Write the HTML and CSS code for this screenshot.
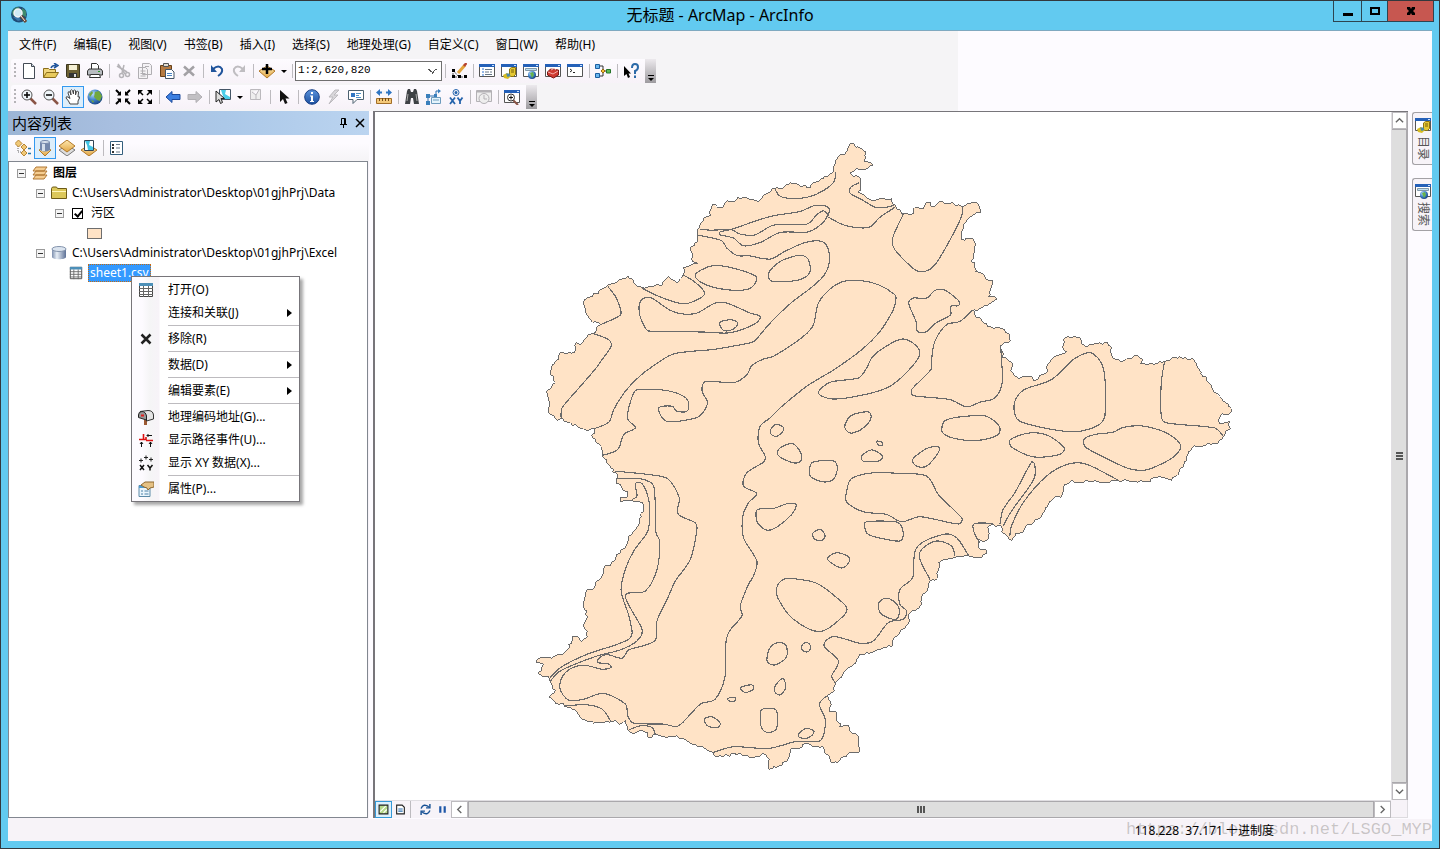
FILE: index.html
```html
<!DOCTYPE html>
<html lang="zh-CN">
<head>
<meta charset="utf-8">
<title>无标题 - ArcMap - ArcInfo</title>
<link rel="stylesheet" href="styles.css">
</head>
<body>
<svg class="defs" aria-hidden="true">
  <defs>
    <linearGradient id="blueBall" x1="0" y1="0" x2="0" y2="1"><stop offset="0" stop-color="#5b93dc"/><stop offset="1" stop-color="#1c4f9f"/></linearGradient>
    <linearGradient id="gold" x1="0" y1="0" x2="0" y2="1"><stop offset="0" stop-color="#ffe9b0"/><stop offset="1" stop-color="#e0a544"/></linearGradient>
    <linearGradient id="steel" x1="0" y1="0" x2="1" y2="0"><stop offset="0" stop-color="#7d8fae"/><stop offset=".35" stop-color="#e8eff7"/><stop offset="1" stop-color="#5d7196"/></linearGradient>
    <radialGradient id="earth" cx=".35" cy=".3" r=".8"><stop offset="0" stop-color="#b8dcfa"/><stop offset=".5" stop-color="#3f80c8"/><stop offset="1" stop-color="#123a78"/></radialGradient>
    <symbol id="win" viewBox="0 0 16 16"><path d="M.5 1.500h15v12H.5z" fill="#fff" stroke="#555"/><path d="M0 1h16v3H0z" fill="#2460b8"/><path d="M13 2h2v1h-2z" fill="#cfe2ff"/></symbol>
    <symbol id="catalog" viewBox="0 0 16 16"><use href="#win"/><path d="M8.500 6l2-1.500h4v7l-2 2h-4z" fill="#e6c832" stroke="#8d7410"/><path d="M2 12l4-2 4 3-3 3-4-1z" fill="#d8bd21"/><path d="M5 10.500h3.500l1 2.500-3 1z" fill="#4b8aa8"/><path d="M10 7h3M10 9h3" stroke="#775f08"/></symbol>
    <symbol id="search" viewBox="0 0 16 16"><use href="#win"/><path d="M2.500 5.500h11v2h-11z" fill="#bfe0f3" stroke="#8197a8"/><circle cx="9" cy="12" r="4" fill="url(#earth)"/><path d="M7 10l3-1 1 3-2 3z" fill="#68b34b"/></symbol>
    <symbol id="grid" viewBox="0 0 16 16"><path d="M1.500 1.500h13v13h-13z" fill="#fff" stroke="#444"/><path d="M1 1h14v3H1z" fill="#4c8fb8"/><path d="M1 6.500h14M1 9.500h14M1 12.500h14M5.500 4v11M10.500 4v11" stroke="#666"/></symbol>
    <symbol id="cyl" viewBox="0 0 16 16"><path d="M1 4v8c0 3 14 3 14 0V4z" fill="url(#steel)"/><ellipse cx="8" cy="4" rx="7" ry="2.500" fill="#dbe4ef" stroke="#8494ad"/></symbol>
  </defs>
</svg>

<div class="window">
  <header class="titlebar">
    <svg class="app-icon" viewBox="0 0 18 18"><circle cx="9" cy="8.500" r="8" fill="#1f4d78"/><path d="M2 6q2-5 7-5l-1 4-5 5zM12 2l4 3v6l-4-2z" fill="#3f8a6c"/><path d="M3 11l5 4 3-1-3-4z" fill="#3a78ac"/><circle cx="8" cy="7" r="4" fill="#cfeaf5" stroke="#f4f4f4" stroke-width="1.500"/><path d="M11 10l5 6" stroke="#6a4632" stroke-width="3"/><path d="M11 10l4 5" stroke="#eee"/></svg>
    <h1>无标题 - ArcMap - ArcInfo</h1>
    <div class="caption-buttons">
      <button class="min" aria-label="最小化"><svg viewBox="0 0 12 12"><path d="M1 8h10v3H1z"/></svg></button>
      <button class="max" aria-label="最大化"><svg viewBox="0 0 12 12"><path d="M1 2h10v8H1zM3 4v4h6V4z" fill-rule="evenodd"/></svg></button>
      <button class="close" aria-label="关闭"><svg viewBox="0 0 12 12"><path d="M2 2h3l1 2 1-2h3v2L8 6l2 2v2H7L6 8l-1 2H2V8l2-2-2-2z"/></svg></button>
    </div>
  </header>

  <div class="client">
    <div class="commands">
      <nav class="menubar">
        <button>文件(F)</button><button>编辑(E)</button><button>视图(V)</button><button>书签(B)</button><button>插入(I)</button><button>选择(S)</button><button>地理处理(G)</button><button>自定义(C)</button><button>窗口(W)</button><button>帮助(H)</button>
      </nav>

      <div class="toolbar">
        <i class="grip"></i>
        <button aria-label="新建"><svg viewBox="0 0 16 16"><path d="M2.500.500h8l3 3v12h-11z" fill="#fff" stroke="#444b55"/><path d="M10.500.500v3h3" fill="#cdd9e4" stroke="#444b55"/></svg></button>
        <button aria-label="打开"><svg viewBox="0 0 16 16"><path d="M.5 14.500v-9h5l1 1h6v3" fill="#f0d57b" stroke="#8a6d1b"/><path d="M.5 14.500l3-5h12l-3 5z" fill="#e8c95c" stroke="#8a6d1b"/><path d="M8 5q1-3 5-2.500M11 0l4 2.500L11 5" fill="none" stroke="#20549c" stroke-width="1.500"/></svg></button>
        <button aria-label="保存"><svg viewBox="0 0 16 16"><path d="M1.500 1.500h13v13h-12l-1-1z" fill="#6c6033" stroke="#3b351e"/><path d="M4 2h8v5H4z" fill="#f5f0d5"/><path d="M4 10h8v4H4z" fill="#333"/><path d="M9 11h2v3H9z" fill="#ddd"/></svg></button>
        <button aria-label="打印"><svg viewBox="0 0 16 16"><path d="M4.500 6V.500h5l2 2V6" fill="#fff" stroke="#333"/><path d="M2 6h12l1.500 2v4H.5V8z" fill="#b8bcc0" stroke="#333"/><path d="M3.500 11.500h9l1 3h-11z" fill="#fff" stroke="#333"/><path d="M11 8.500h2" stroke="#2c9c2c"/></svg></button>
        <i class="sep"></i>
        <button aria-label="剪切" disabled><svg viewBox="0 0 16 16" fill="none" stroke="#b5b3b7" stroke-width="1.500"><path d="M3 1l7 10M9 2L7 10M2 3l10 6"/><circle cx="6.500" cy="12.500" r="2"/><circle cx="12.500" cy="11.500" r="2"/></svg></button>
        <button aria-label="复制" disabled><svg viewBox="0 0 16 16" fill="#f4f2f5" stroke="#b0aeb2"><path d="M5.500.500h7l2 2v9h-9zM1.500 4.500h7l2 2v9h-9z"/><path d="M3.500 8h5M3.500 10.500h5M3.500 13h5M8 3.500h4" /></svg></button>
        <button aria-label="粘贴"><svg viewBox="0 0 16 16"><path d="M1.500 2.500h11v11h-11z" fill="#b57a42" stroke="#674018"/><path d="M4.500.500h5v3h-5z" fill="#e2dcd2" stroke="#555"/><path d="M6.500 6.500h6l2.500 2.500v6.500H6.500z" fill="#fff" stroke="#456"/><path d="M8 10.500h5M8 12.500h5" stroke="#4b83c3"/></svg></button>
        <button aria-label="删除" disabled><svg viewBox="0 0 16 16"><path d="M3 3.500l10 9M13 3.500l-10 9" stroke="#a3a1a5" stroke-width="2.500"/></svg></button>
        <i class="sep"></i>
        <button aria-label="撤消"><svg viewBox="0 0 16 16"><path d="M4 6q6-5 9 0 1 4-4 7" fill="none" stroke="#20549c" stroke-width="2"/><path d="M2 2l0 7h6z" fill="#20549c"/></svg></button>
        <button aria-label="恢复" disabled><svg viewBox="0 0 16 16"><path d="M12 6q-6-5-9 0-1 4 4 7" fill="none" stroke="#bfbdc1" stroke-width="2"/><path d="M14 2v7H8z" fill="#bfbdc1"/></svg></button>
        <i class="sep"></i>
        <button aria-label="添加数据"><svg viewBox="0 0 16 16"><path d="M0 8l8-5 8 5-8 7z" fill="url(#gold)" stroke="#b17828"/><path d="M8 1v10M3 6h10" stroke="#000" stroke-width="2.500"/></svg></button>
        <button class="drop" aria-label="添加数据选项"></button>
        <i class="sep"></i>
        <select class="scale" aria-label="比例尺"><option>1:2,620,820</option></select>
        <i class="sep"></i>
        <button aria-label="编辑器"><svg viewBox="0 0 16 16"><path d="M2 7v7h12M2 7l5 6" stroke="#555" stroke-dasharray="2 1" fill="none"/><path d="M1 6h3v3H1zM1 12h3v3H1zM7 12h3v3H7zM13 12h3v3h-3z"/><path d="M7 10l7-8" stroke="#e2a33b" stroke-width="3"/><path d="M13 3l2.500-3" stroke="#b54030" stroke-width="2.500"/></svg></button>
        <i class="sep"></i>
        <button aria-label="内容列表"><svg viewBox="0 0 16 16"><use href="#win"/><path d="M3 6h2M3 9h2M3 12h2" stroke="#2a6fd0"/><path d="M6 6.500h7M6 9h4M11 9h2M6 11.500h7" stroke="#678"/></svg></button>
        <button aria-label="目录"><svg viewBox="0 0 16 16"><use href="#catalog"/></svg></button>
        <button aria-label="搜索"><svg viewBox="0 0 16 16"><use href="#search"/></svg></button>
        <button aria-label="工具箱"><svg viewBox="0 0 16 16"><use href="#win"/><path d="M2.500 9l3-3 8 1v5l-5 3-6-3z" fill="#cf3a31" stroke="#7c1815"/><path d="M3 9l5 2 5-3M6 7l3-1.500 2 1.500" stroke="#f6aea8" fill="none"/></svg></button>
        <button aria-label="Python"><svg viewBox="0 0 16 16"><use href="#win"/><path d="M3 6l2 1.500L3 9M6 9.500h2" fill="none" stroke="#222"/></svg></button>
        <i class="sep"></i>
        <button aria-label="模型构建器"><svg viewBox="0 0 16 16"><path d="M5 3h3v10H5M8 8h4" stroke="#333" fill="none"/><path d="M.5 1.500h4v4h-4zM.5 10.500h4v4h-4z" fill="#6ab7ef" stroke="#1c5fa0"/><path d="M8 6l2 2-2 2-2-2z" fill="#f6c03a" stroke="#9b6a0a"/><path d="M11.500 6.500h4v3.500h-4z" fill="#5fbd56" stroke="#26752a"/></svg></button>
        <i class="sep"></i>
        <button aria-label="这是什么"><svg viewBox="0 0 16 16"><path d="M1 3v10l2.500-2 1.500 4 2-1-1.500-3.500H8z"/><path d="M9 5q0-4 3-4t3 3-3 4v3M12 12.500v2.500" fill="none" stroke="#2c6aa8" stroke-width="2"/></svg></button>
        <button class="overflow" aria-label="更多"></button>
      </div>

      <div class="toolbar">
        <i class="grip"></i>
        <button aria-label="放大"><svg viewBox="0 0 16 16"><path d="M9 9l6 6" stroke="#8a5446" stroke-width="2.500"/><circle cx="6" cy="6" r="5" fill="#f0f6fa" stroke="#555"/><path d="M6 3v6M3 6h6" stroke="#000" stroke-width="1.500"/></svg></button>
        <button aria-label="缩小"><svg viewBox="0 0 16 16"><path d="M9 9l6 6" stroke="#8a5446" stroke-width="2.500"/><circle cx="6" cy="6" r="5" fill="#f0f6fa" stroke="#555"/><path d="M3 6h6" stroke="#000" stroke-width="1.500"/></svg></button>
        <button class="active" aria-label="平移"><svg viewBox="0 0 16 16"><path d="M5 15q-1-3-4-6 0-2 2-1l2 1.500L3 4q0-2 2-1l1 3-.500-4.500q1-1.500 2 0L8.500 5V1.500q1-1 2 0V6l1-3.500q1.500-1 2 .5l-.5 5q2-1 1.500 1L13 12v3z" fill="#fff" stroke="#444"/></svg></button>
        <button aria-label="全图"><svg viewBox="0 0 16 16"><circle cx="8" cy="8" r="7.500" fill="url(#earth)"/><path d="M8 3l4-1 3 5-2 5-3-1-3-3zM2 5l3-3 1 2-3 4zM4 11l3 1-1 2z" fill="#72a83d"/></svg></button>
        <i class="sep"></i>
        <button aria-label="固定比例放大"><svg viewBox="0 0 16 16"><path d="M1 1l4 4M15 1l-4 4M1 15l4-4M15 15l-4-4" stroke="#000" stroke-width="2"/><path d="M6 2v4.500H2zM10 2v4.500h4zM6 14V9.500H2zM10 14V9.500h4z"/></svg></button>
        <button aria-label="固定比例缩小"><svg viewBox="0 0 16 16"><path d="M2 2l4 4M14 2l-4 4M2 14l4-4M14 14l-4-4" stroke="#000" stroke-width="1.500"/><path d="M1 1h5L1 6zM15 1h-5l5 5zM1 15h5l-5-5zM15 15h-5l5-5z"/></svg></button>
        <i class="sep"></i>
        <button aria-label="返回"><svg viewBox="0 0 16 16"><path d="M1 8l6-5.500v3h8v5H7v3z" fill="#3c7fe0" stroke="#1d4a9b"/></svg></button>
        <button aria-label="前进" disabled><svg viewBox="0 0 16 16"><path d="M15 8L9 2.500v3H1v5h8v3z" fill="#c2c0c4" stroke="#b1afb3"/></svg></button>
        <i class="sep"></i>
        <button aria-label="选择要素"><svg viewBox="0 0 16 16"><path d="M4.500.500h11v10h-11z" fill="#fff" stroke="#456"/><path d="M6 1h5l-1 4 5 3v2H9z" fill="#4ccde8"/><path d="M1 2v11l3-2.500 1.500 4 2-1L6 9.500h3.500z" fill="#ddd" stroke="#222"/></svg></button>
        <button class="drop" aria-label="选择选项"></button>
        <button aria-label="清除所选" disabled><svg viewBox="0 0 16 16"><path d="M2.500.500h10v10h-10zM4 3l4 3 3-5M8 6v4" fill="#eee" stroke="#bbb9bd"/></svg></button>
        <i class="sep"></i>
        <button aria-label="选择元素"><svg viewBox="0 0 16 16"><path d="M4 1v12l3-3 2 5 2.500-1L9.500 9.500h4z" fill="#111"/></svg></button>
        <i class="sep"></i>
        <button aria-label="识别"><svg viewBox="0 0 16 16"><circle cx="8" cy="8" r="7.300" fill="url(#blueBall)" stroke="#173f86"/><path d="M7 3h2v2H7zM6 6.500h3V12h1v1H6v-1h1V7.500H6z" fill="#fff"/></svg></button>
        <button aria-label="超链接" disabled><svg viewBox="0 0 16 16"><path d="M9 1L3 8h4l-4 7 9-9H8l5-5z" fill="#d9d7db" stroke="#bcbabe"/></svg></button>
        <button aria-label="HTML 弹出窗口"><svg viewBox="0 0 16 16"><path d="M.5 1.500h15v9H9l-4 4v-4H.5z" fill="#fff" stroke="#4c6170"/><path d="M3 4h4v4H3z" fill="#3177c4"/><path d="M8 4.500h5M8 6.500h3M8 8.500h5" stroke="#4c90c8"/></svg></button>
        <i class="sep"></i>
        <button aria-label="测量"><svg viewBox="0 0 16 16"><path d="M0 3.500L4 0v2.500h8V0l4 3.500L12 7V4.500H4V7z" fill="#2f75c2"/><path d="M6 2h4v3H6z" fill="#f5f3f6"/><path d="M.5 9.500h15v5H.5z" fill="#f4c878" stroke="#a36e28"/><path d="M3.500 9v3M6.500 9v3M9.500 9v3M12.500 9v3" stroke="#744a16"/></svg></button>
        <i class="sep"></i>
        <button aria-label="查找"><svg viewBox="0 0 16 16"><path d="M3 2l1-2h2l1 3h2l1-3h2l1 2 2 13h-5l-1-6H7l-1 6H1z" fill="#3e4145"/><path d="M4 5l-1 7M12 5l1 7" stroke="#aaa"/></svg></button>
        <button aria-label="查找路径"><svg viewBox="0 0 16 16"><path d="M2 14V7h8V2M10 2h4" fill="none" stroke="#2c6fae"/><path d="M12 0l3 2-3 2.500zM0 5h4v4H0zM0 12h4v4H0zM8 5h3v3H8z" fill="#3a7fbc"/><path d="M5.500 8.500h9v6h-9z" fill="#e5f4fc" stroke="#6d9bbd"/><path d="M7 11h6" stroke="#6d9bbd"/></svg></button>
        <button aria-label="转到 XY"><svg viewBox="0 0 16 16" fill="none" stroke="#2564ac"><circle cx="8" cy="3.500" r="3"/><circle cx="8" cy="3.500" r=".8" stroke-width="1.500"/><path d="M2 8.500l5 6.500M7 8.500L2 15M9.500 8.500l2.500 3.500 2.500-3.500M12 12v3" stroke-width="1.800"/></svg></button>
        <i class="sep"></i>
        <button aria-label="时间滑块" disabled><svg viewBox="0 0 16 16" fill="#eee" stroke="#b3b1b5"><path d="M.5 1.500h15v11H.5z"/><path d="M1 2.500h14" stroke-width="2"/><circle cx="8" cy="9.500" r="5"/><path d="M8 6v4h3"/></svg></button>
        <i class="sep"></i>
        <button aria-label="查看器"><svg viewBox="0 0 16 16"><use href="#win"/><path d="M9 11l5 5" stroke="#8a5446" stroke-width="2"/><circle cx="7" cy="8.500" r="3.500" fill="#fff" stroke="#333"/><path d="M7 6.500v4M5 8.500h4" stroke="#111"/></svg></button>
        <button class="overflow" aria-label="更多"></button>
      </div>
    </div>

    <main class="workspace">
      <aside class="toc">
        <div class="toc-head">
          <h2>内容列表</h2>
          <button aria-label="自动隐藏"><svg viewBox="0 0 10 10"><path d="M2.500 6V.5h4V6M1 6.500h7M4.500 6.500V10M5.500 1v5" fill="none" stroke="#000"/></svg></button>
          <button aria-label="关闭面板"><svg viewBox="0 0 10 10"><path d="M1 1l8 8M9 1L1 9" stroke="#000" stroke-width="1.500"/></svg></button>
        </div>
        <div class="toc-tools">
          <button aria-label="按绘制顺序列出"><svg viewBox="0 0 16 16"><path d="M3 4v8h5M8 7h3" stroke="#666" stroke-dasharray="1 1" fill="none"/><path d="M3.500 0L7 3.500 3.500 7 0 3.500zM9 4l3 3-3 3-3-3zM9 10l3 3-3 3-3-3z" fill="#f0c878" stroke="#b88736"/><path d="M13 8.500h3M13 13.500h3" stroke="#2a78a8" stroke-width="1.500"/></svg></button>
          <button class="active" aria-label="按源列出"><svg viewBox="0 0 16 16"><path d="M2 10l6-3 6 3-6 6z" fill="url(#gold)" stroke="#b17828"/><path d="M3 2v8q5 3 10 0V2z" fill="#7488ab"/><path d="M5 3h3v8H5z" fill="#d5dfeb"/><ellipse cx="8" cy="2" rx="4.500" ry="1.500" fill="#dde6f0" stroke="#7488ab"/></svg></button>
          <button aria-label="按可见性列出"><svg viewBox="0 0 16 16"><path d="M0 10l8-5 8 5-8 6z" fill="#ddd" stroke="#777"/><path d="M0 6l8-6 8 6-8 6z" fill="url(#gold)" stroke="#b17828"/></svg></button>
          <button aria-label="按选择列出"><svg viewBox="0 0 16 16"><path d="M0 10l8-5 8 5-8 6z" fill="url(#gold)" stroke="#b17828"/><path d="M3.500.500h9v10h-9z" fill="#fff" stroke="#345"/><path d="M4 1h5l-1 4 4 2v3H7L6 5z" fill="#43c3e4"/></svg></button>
          <i class="sep"></i>
          <button aria-label="选项"><svg viewBox="0 0 16 16"><path d="M1.500 1.500h12v13h-12z" fill="#fff" stroke="#345f7d"/><path d="M3 4h2v2H3zM3 7h2v2H3zM3 11h2v2H3z" fill="#333"/><path d="M7 4.500h4M7 8h4M7 12h4" stroke="#6d7c8c"/></svg></button>
        </div>
        <ul class="tree">
          <li class="level-0"><button class="expander" aria-label="折叠"></button><svg viewBox="0 0 16 16"><path d="M1 14l3-4h11l-3 4zM1 10l3-4h11l-3 4zM1 6l3-4h11l-3 4z" fill="#f5cd91" stroke="#b17834"/></svg><strong>图层</strong></li>
          <li class="level-1"><button class="expander" aria-label="折叠"></button><svg viewBox="0 0 16 16"><path d="M.5 13.500v-10l1-1.500h4l1 1.500h9v10z" fill="#dcc85a" stroke="#6d5b16"/><path d="M1 6.500h14" stroke="#fff6bb"/></svg><span>C:\Users\Administrator\Desktop\01gjhPrj\Data</span></li>
          <li class="level-2"><button class="expander" aria-label="折叠"></button><label><input type="checkbox" checked><span>污区</span></label></li>
          <li class="level-3"><i class="swatch"></i></li>
          <li class="level-1"><button class="expander" aria-label="折叠"></button><svg viewBox="0 0 16 16"><use href="#cyl"/></svg><span>C:\Users\Administrator\Desktop\01gjhPrj\Excel</span></li>
          <li class="level-table"><svg class="small" viewBox="0 0 16 16"><use href="#grid"/></svg><span class="selected">sheet1.csv</span></li>
        </ul>
      </aside>

      <section class="view">
        <svg class="map" viewBox="375 112 1016 689" role="img" aria-label="污区地图">
          <path class="coast" d="M851 143 858 147 866 152 866 157 864 161 873 166 867 169 858 169 850 173 860 178 860 184 861 187 858 192 864 195 867 198 875 201 880 199 887 200 892 198 893 204 900 210 902 214 914 214 913 210 918 208 923 209 928 202 934 207 940 201 947 204 959 205 963 207 967 204 977 203 981 213 975 214 967 220 964 227 961 239 973 239 975 247 974 256 971 262 975 263 976 272 983 274 986 279 993 281 989 297 997 299 990 304 980 309 974 310 975 315 982 321 988 327 1005 330 1010 336 1011 341 1000 347 1003 358 1013 364 1011 371 1018 378 1032 377 1034 381 1042 375 1047 373 1048 365 1057 356 1067 352 1063 348 1064 339 1068 337 1080 338 1082 344 1087 347 1108 343 1112 348 1113 358 1121 362 1130 359 1138 356 1143 360 1141 364 1163 363 1172 359 1180 357 1188 360 1193 359 1199 369 1207 381 1217 394 1232 409 1227 415 1222 414 1219 421 1220 424 1226 423 1230 421 1231 429 1226 431 1225 436 1221 440 1218 444 1195 446 1187 458 1183 468 1172 481 1157 478 1147 482 1118 481 1107 483 1093 482 1077 483 1072 481 1064 488 1063 495 1052 501 1045 512 1022 533 1016 534 1012 541 1008 537 1002 533 1002 527 993 525 988 528 988 540 985 542 979 540 979 548 987 552 987 554 982 558 975 558 968 556 955 558 939 563 938 577 935 581 930 582 928 590 923 595 920 607 908 617 909 623 900 633 892 642 892 647 873 653 860 655 853 666 843 675 836 683 834 692 827 696 831 706 829 712 836 713 837 722 841 725 839 728 848 726 850 732 858 737 859 753 853 753 842 758 838 763 831 763 829 757 824 752 822 747 812 747 803 745 797 750 791 750 788 760 782 766 769 770 769 760 765 755 758 758 744 757 740 754 717 758 713 753 687 742 674 737 665 738 655 735 651 739 645 733 630 733 627 728 625 721 619 725 615 721 607 722 597 723 593 724 580 718 575 711 567 708 563 704 555 704 549 698 555 691 550 683 548 677 538 675 543 665 535 663 538 659 548 658 562 655 569 648 572 637 577 637 581 642 587 638 587 632 583 626 587 617 584 610 583 603 585 593 593 590 600 580 604 568 614 562 616 555 626 546 628 537 637 527 641 517 643 508 642 503 632 501 620 502 620 498 627 498 627 492 620 485 616 484 617 477 610 468 602 457 601 447 592 438 594 429 588 431 578 428 570 423 560 419 557 421 548 413 548 400 546 392 555 383 550 373 552 365 558 360 560 353 574 353 576 343 580 345 588 335 595 333 596 328 601 325 590 320 585 313 584 300 592 297 607 286 617 282 628 276 633 282 640 287 648 287 662 285 668 277 677 283 683 275 683 268 698 264 691 259 691 247 697 242 697 233 703 219 708 217 712 205 723 207 727 201 734 202 737 197 752 200 758 202 772 189 783 188 790 183 797 184 810 188 813 183 823 179 834 171 836 160 840 155 845 154Z"/>
          <g class="contours" transform="translate(530 130) scale(.333333)">
            <polyline points="735,178 745,195 760,203 800,206 840,200 880,182 912,155 916,125"/>
            <polyline points="988,158 962,172 960,190 1000,212 1035,232 1070,232 1092,226"/>
            <polyline points="895,262 940,285 990,294 1020,291 1050,262 1080,242 1095,232"/>
            <polyline points="508,298 540,301 605,300 630,313 675,315 730,286 830,283 860,255 880,243 892,258 865,290 830,307 750,308 690,338 640,348 610,325 570,315 570,306 605,298 720,260 810,245 850,228 885,228 898,240 892,262"/>
            <polyline points="500,317 515,318 575,333 590,355 620,377 655,378 720,388 760,367 825,338 875,335 895,360 895,410 875,445 835,480 780,522 720,580 680,627 665,638 605,650 545,660 430,673 360,715 330,738 285,785 250,840 235,878 190,898"/>
            <polygon points="495,435 545,408 600,413 675,438 678,455 655,478 590,480 520,462"/>
            <polygon points="715,430 750,395 810,376 835,390 838,430 800,452 725,454"/>
            <polyline points="458,435 495,458 523,488 510,505 465,522 420,513 370,493 335,475"/>
            <polygon points="330,515 350,503 370,508 420,542 460,553 500,550 555,520 590,520 660,550 690,560 680,578 640,598 590,610 520,607 355,604 340,585 327,550"/>
            <polygon points="568,580 590,571 615,573 622,585 605,600 580,602"/>
            <polyline points="232,470 255,500 272,545 265,560 210,585"/>
            <polyline points="190,612 235,630 242,650 215,690 195,718 150,770 95,835 92,868"/>
            <polyline points="215,978 262,960 280,915 315,895 293,870 295,835 315,783 340,779 410,783 460,800 475,820 470,845 440,845 425,830 385,835 400,870 425,877 475,870 510,858 532,820 517,790 517,765 530,755 615,758 650,735 665,708 700,688 730,680 820,620 850,585 865,520 900,478 940,455 990,452 1045,465 1095,495 1098,508 1090,540 1050,605 995,660 915,718 830,770 750,835 720,865 690,890 685,940 705,980 700,998 650,1030 640,1070 680,1092 655,1120 638,1160 640,1225 680,1295 670,1340 655,1365 630,1430 635,1460 595,1510 585,1560 585,1640 555,1710 510,1725 445,1790 400,1785 310,1782 292,1760 285,1725 220,1693 160,1710 115,1713 88,1675 105,1630 155,1608 215,1620 242,1615 232,1603 202,1600 210,1583 232,1576 275,1587 295,1562 373,1535 380,1475 415,1400 435,1355 480,1290 500,1200 495,1180 443,1153 447,1105 415,1050 370,1037 255,1025"/>
            <polyline points="258,1048 330,1048 370,1070 377,1210 388,1235 380,1320 345,1385 285,1400 335,1500 320,1535 270,1562 195,1582 90,1625 60,1655"/>
            <polyline points="305,1110 320,1100 315,1063 335,1063 355,1110 358,1170 350,1210 310,1265 285,1320 272,1380 280,1415 298,1470 298,1528 170,1575 90,1615 55,1650"/>
            <polyline points="1120,253 1088,325 1095,360 1155,420 1185,425 1215,405 1255,340 1295,260 1298,230"/>
            <polygon points="1136,520 1150,505 1190,505 1215,482 1245,481 1288,515 1285,528 1262,530 1262,555 1215,582 1190,606 1162,605 1158,575"/>
            <polyline points="1330,540 1290,575 1250,585 1215,635 1205,690 1203,720 1145,780 1150,798 1260,810 1310,832 1350,818 1395,805 1417,760 1415,690 1412,645"/>
            <polygon points="865,790 900,758 985,745 1010,715 1025,685 1060,655 1120,628 1168,660 1155,700 1080,770 990,798 905,808"/>
            <polygon points="1670,670 1690,672 1715,700 1725,740 1728,820 1715,880 1630,907 1470,875 1453,825 1480,782 1565,750 1630,690"/>
            <polyline points="1905,695 1895,760 1895,860 1910,880 2055,895 2080,918"/>
            <polygon points="1240,880 1258,868 1320,859 1370,860 1408,890 1405,915 1350,932 1290,930 1240,912"/>
            <polygon points="1442,930 1500,910 1555,918 1603,955 1590,975 1510,982 1445,952"/>
            <polygon points="1662,930 1695,915 1750,908 1780,894 1835,889 1910,910 1952,945 1935,980 1870,1015 1835,1023 1790,1015 1670,955"/>
            <polyline points="1410,1185 1420,1140 1455,1090 1505,998 1515,1005 1512,1050 1445,1145 1420,1190"/>
            <polyline points="1440,1220 1445,1190 1480,1120 1550,1040 1615,1004 1670,1004 1765,1052"/>
            <polyline points="1390,1182 1333,1183 1333,1210 1350,1240"/>
            <polygon points="965,1047 1030,1030 1110,1032 1190,1040 1225,1095 1295,1165 1290,1183 1260,1180 1170,1162 1115,1177 1070,1155 1000,1147 950,1118 950,1085"/>
            <polygon points="1007,1178 1100,1178 1118,1200 1115,1233 1080,1232 1020,1218 1007,1205"/>
            <polyline points="1315,1277 1280,1225 1240,1215 1160,1255 1148,1345 1110,1380 1110,1425 1130,1445 1120,1470 1075,1480 1030,1535 990,1542 910,1522 882,1550 925,1595 905,1640 915,1660"/>
            <polyline points="1275,1280 1265,1250 1220,1235 1175,1260 1170,1290 1200,1350"/>
            <polygon points="720,905 735,885 758,892 760,902 745,918 728,918"/>
            <polygon points="742,965 765,947 790,943 812,970 812,995 790,1000 750,983"/>
            <polygon points="838,1020 848,998 910,994 922,1015 910,1050 878,1057 842,1042"/>
            <polygon points="945,885 965,857 1015,847 1023,865 1000,895 965,911 948,902"/>
            <polygon points="1040,935 1056,938 1058,946 1045,946"/>
            <polygon points="995,980 1025,961 1058,980 1045,995 1000,995"/>
            <polygon points="1148,990 1190,957 1225,952 1225,970 1190,1010 1160,1010"/>
            <polygon points="678,1145 690,1138 730,1137 770,1123 798,1125 785,1155 740,1193 710,1202 682,1180"/>
            <polygon points="848,1212 870,1200 885,1218 875,1233 855,1230"/>
            <polygon points="893,1285 920,1270 955,1282 957,1298 935,1316 900,1298"/>
            <polygon points="740,1375 760,1350 790,1348 860,1362 920,1405 950,1435 940,1460 870,1507 790,1470 745,1410"/>
            <polygon points="1045,1425 1065,1407 1090,1415 1108,1440 1098,1470 1055,1455"/>
            <polygon points="710,1590 720,1555 745,1540 768,1550 768,1585 735,1607 715,1602"/>
            <polygon points="814,1556 820,1543 835,1542 842,1556 832,1568 818,1564"/>
            <polygon points="632,1675 665,1667 670,1680 645,1690"/>
            <polygon points="592,1712 600,1705 617,1707 608,1718"/>
            <polygon points="735,1670 758,1648 767,1675 750,1697 734,1688"/>
            <polygon points="692,1745 705,1738 735,1740 742,1760 738,1800 710,1810 692,1790"/>
            <polygon points="523,1770 545,1763 570,1782 560,1796 532,1790"/>
            <polygon points="807,1812 830,1798 852,1808 835,1826 808,1825"/>
            <polyline points="550,1870 610,1853 715,1858 800,1837 865,1837 880,1820 885,1770 868,1725 890,1700"/>
            <polyline points="105,1730 170,1727 215,1740 240,1775"/>
            <polyline points="295,1803 330,1790 365,1795 375,1815"/>
          </g>
        </svg>
        <div class="vscroll">
          <button aria-label="向上滚动"><svg viewBox="0 0 10 10"><path d="M1 7l4-4 4 4"/></svg></button>
          <div class="thumb"><i></i></div>
          <button aria-label="向下滚动"><svg viewBox="0 0 10 10"><path d="M1 3l4 4 4-4"/></svg></button>
        </div>
        <div class="hbar">
          <button class="view-mode active" aria-label="数据视图"><svg viewBox="0 0 10 10"><path d="M1 1h8v8H1z" fill="#b6d98a" stroke="#222"/><path d="M2 7l5-5M5 8l3-3" stroke="#fff"/></svg></button>
          <button class="view-mode" aria-label="布局视图"><svg viewBox="0 0 10 10"><path d="M1.500 1h5l2 2v6h-7z" fill="#fff" stroke="#222"/><path d="M3 4.500h4M3 6.500h4" stroke="#2b6dad"/></svg></button>
          <i class="sep"></i>
          <button class="plain" aria-label="刷新"><svg viewBox="0 0 10 10"><path d="M1 4q2-5 7-1.500M9 0v3.500H5.500M9 6q-2 5-7 1.500M1 10V6.500h3.500" fill="none" stroke="#155094" stroke-width="1.300"/></svg></button>
          <button class="plain" aria-label="暂停绘制"><svg viewBox="0 0 10 10"><path d="M2 2h2v6H2zM6 2h2v6H6z" fill="#1f57a8"/></svg></button>
          <button class="arrow" aria-label="向左滚动"><svg viewBox="0 0 10 10"><path d="M7 1L3 5l4 4"/></svg></button>
          <div class="thumb"><i></i></div>
          <button class="arrow" aria-label="向右滚动"><svg viewBox="0 0 10 10"><path d="M3 1l4 4-4 4"/></svg></button>
        </div>
        <div class="corner"></div>
      </section>

      <div class="dock">
        <button><svg viewBox="0 0 16 16"><use href="#catalog"/></svg><span>目录</span></button>
        <button><svg viewBox="0 0 16 16"><use href="#search"/></svg><span>搜索</span></button>
      </div>
    </main>

    <footer class="statusbar">
      <span class="coords">118.228&nbsp; 37.171 十进制度</span>
      <span class="watermark">https://blog.csdn.net/LSGO_MYP</span>
    </footer>
  </div>

  <div class="context-menu" role="menu">
    <button role="menuitem"><svg viewBox="0 0 16 16"><use href="#grid"/></svg>打开(O)</button>
    <button role="menuitem" class="sub">连接和关联(J)</button>
    <hr>
    <button role="menuitem"><svg viewBox="0 0 16 16"><path d="M3.500 3.500l9 9M12.500 3.500l-9 9" stroke="#222" stroke-width="2.500"/></svg>移除(R)</button>
    <hr>
    <button role="menuitem" class="sub">数据(D)</button>
    <hr>
    <button role="menuitem" class="sub">编辑要素(E)</button>
    <hr>
    <button role="menuitem"><svg viewBox="0 0 16 16"><path d="M6 11h3v5H6z" fill="#9c5a34"/><path d="M2 2.500l8-1q5 0 5.500 4.500v4l-7 2V7z" fill="#e4e4e4" stroke="#333"/><path d="M.5 6q0-3.500 3.500-3.500T8.500 7v4L.5 8.500z" fill="#999" stroke="#222"/><path d="M3 6.500h3" stroke="#d22" stroke-width="2"/></svg>地理编码地址(G)...</button>
    <button role="menuitem"><svg viewBox="0 0 16 16"><path d="M1 7.500h7V5M8 8.500h7M5.500 2v5" stroke="#d11" stroke-width="1.600" fill="none"/><path d="M3.500 10v5M2 12l1.500-2L5 12M12.500 10v5M11 12l1.500-2 1.500 2M9 3.500h5M10.500 2L9 3.500 10.500 5" stroke="#111" fill="none"/></svg>显示路径事件(U)...</button>
    <button role="menuitem"><svg viewBox="0 0 16 16"><path d="M1 5.500h4M3 3.500v4M6 2.500h4M8 .5v4M11 4.500h4M13 2.500v4" stroke="#222"/><path d="M2 10l4 5M6 10l-4 5M9.500 10l2.500 3 2.500-3M12 13v2.500" stroke="#111" stroke-width="1.500" fill="none"/></svg>显示 XY 数据(X)...</button>
    <hr>
    <button role="menuitem"><svg viewBox="0 0 16 16"><path d="M1 4.500h11v11H1z" fill="#eaf5fc" stroke="#5c8aa8"/><path d="M1 5h11v2H1z" fill="#4d9bd0"/><path d="M3 10h2M6.500 10h4M3 13h2M6.500 13h4" stroke="#4d81a8"/><path d="M3 4l4-3h9v5l-4 1-2 2-1-2-3-1z" fill="#e5c184" stroke="#8f6830"/></svg>属性(P)...</button>
  </div>
</div>
<script src="map.js"></script>
</body>
</html>
```

FILE: styles.css
```css
* { box-sizing: border-box; }

body {
  margin: 0;
  font: 12px/16px "Noto Sans", "Noto Sans CJK SC", sans-serif;
  color: #000;
}

button {
  margin: 0;
  padding: 0;
  border: 0;
  background: none;
  font: inherit;
  color: inherit;
}

svg { display: block; width: 16px; height: 16px; flex: none; }
.defs { position: absolute; width: 0; height: 0; }

.window {
  position: relative;
  display: grid;
  grid-template-rows: 29px 1fr;
  height: 100vh;
  min-width: 960px;
  padding: 0 7px 7px;
  border: 1px solid #33383d;
  background: #62caf0;
}

/* Title bar */
.titlebar { display: grid; grid-template-columns: 100px 1fr 100px; }
.titlebar .app-icon { width: 18px; height: 18px; margin: 5px 0 0 2px; }
.titlebar h1 { margin: 3px 0 0; font-size: 16px; line-height: 22px; font-weight: 400; text-align: center; }
.caption-buttons { display: flex; justify-content: flex-end; height: 21px; margin-right: -2px; }
.caption-buttons button {
  display: grid;
  place-items: center;
  width: 28px;
  border: 1px solid #2d4450;
  border-width: 0 0 1px 1px;
}
.caption-buttons svg { width: 12px; height: 12px; }
.caption-buttons .max { width: 26px; }
.caption-buttons .close { width: 47px; border-right-width: 1px; background: #c75750; }

.client {
  display: grid;
  grid-template-rows: 80px 1fr 22px;
  min-height: 0;
  border-top: 1px solid #7fa9c0;
  background: #fdfbff;
}

/* Menus and toolbars */
.commands { justify-self: start; width: 950px; background: #f5f4f6; }
.menubar { display: flex; align-items: center; gap: 1px; height: 28px; padding-left: 3px; }
.menubar button { padding: 0 8px; white-space: nowrap; }

.toolbar {
  display: flex;
  align-items: stretch;
  width: max-content;
  height: 24px;
  margin: 0 0 2px 3px;
  border-radius: 3px;
  background: linear-gradient(#fdfbff, #f7f2f8);
}
.toolbar button, .toc-tools button {
  display: grid;
  place-items: center;
  flex: none;
  width: 22px;
  height: 22px;
  align-self: center;
}
.toolbar .active, .toc-tools .active { border: 1px solid #3399f0; background: #ddeefb; }
.grip {
  width: 7px;
  margin: 4px 0;
  background: linear-gradient(90deg, transparent 3px, #b5b3b7 3px 5px, transparent 5px) 0 0 / 7px 2px;
  mask: repeating-linear-gradient(#000 0 2px, transparent 2px 4px);
}
.sep { flex: none; width: 6px; margin: 5px 0; background: linear-gradient(#bdbbbf, #bdbbbf) center / 1px 100% no-repeat; }
.toolbar .drop { width: 11px; }
.drop::after { content: ""; border: 3px solid transparent; border-top-color: #000; border-bottom: 0; }
.toolbar .overflow {
  width: 11px;
  height: 24px;
  margin-left: 3px;
  align-content: end;
  padding-bottom: 2px;
  background: linear-gradient(#ece9ed, #9d9b9f);
}
.overflow::before { content: ""; width: 6px; height: 1px; margin-bottom: 2px; background: #000; }
.overflow::after { content: ""; border: 3px solid transparent; border-top-color: #000; border-bottom: 0; }
.scale {
  appearance: none;
  align-self: center;
  width: 147px;
  height: 20px;
  padding: 0 2px 2px;
  border: 1px solid #707070;
  border-radius: 0;
  color: #000;
  font: 11px/16px "Liberation Mono", monospace;
  background:
    linear-gradient(45deg, transparent 50%, #555 50%, #555 65%, transparent 65%) right 8px center / 5px 5px no-repeat,
    linear-gradient(-45deg, transparent 50%, #555 50%, #555 65%, transparent 65%) right 4px center / 5px 5px no-repeat,
    #fff;
}

/* Work area */
.workspace { display: grid; grid-template-columns: 361px 1fr 20px; gap: 4px; min-height: 0; }

.toc { display: grid; grid-template-rows: 24px 26px 1fr; min-height: 0; background: #f7f3f8; padding-bottom: 1px; }
.toc-head { display: flex; align-items: center; gap: 6px; padding: 0 4px; background: linear-gradient(90deg, #9cb5d5, #a8bfe0 30%, #abc8e8 60%, #bbd4f0); }
.toc-head h2 { flex: 1; margin: 0; font-size: 15px; line-height: 20px; font-weight: 400; }
.toc-head svg { width: 10px; height: 10px; }
.toc-tools { display: flex; align-items: center; padding-left: 4px; background: linear-gradient(#fdfbff 30%, #f5f4f6); }
.toc-tools .sep { align-self: stretch; }

.tree { margin: 0; padding: 1px 0; list-style: none; width: 360px; border: 1px solid #828790; background: #fff; overflow: hidden; }
.tree li { display: flex; align-items: center; gap: 5px; height: 20px; white-space: nowrap; }
.tree .small { width: 14px; height: 14px; }
.level-0 { padding-left: 8px; }
.level-1 { padding-left: 27px; }
.level-2 { padding-left: 46px; }
.level-3 { padding-left: 78px; }
.level-table { padding-left: 60px; }
.expander {
  width: 9px;
  height: 9px;
  margin-right: 1px;
  border: 1px solid #9a9a9a;
  background: linear-gradient(#333, #333) center / 5px 1px no-repeat #f4f4f4;
}
.tree label { display: flex; align-items: center; gap: 8px; }
.tree input {
  appearance: none;
  width: 11px;
  height: 11px;
  margin: 0 0 0 2px;
  border: 1px solid #000;
  background: #fff;
}
.tree input:checked::after {
  content: "";
  display: block;
  width: 3px;
  height: 6px;
  margin: 0 0 0 3px;
  border: solid #000;
  border-width: 0 2px 2px 0;
  transform: rotate(40deg);
}
.swatch { width: 15px; height: 11px; border: 1px solid #6e6e6e; background: #ffe3c6; }
.selected { padding: 1px 2px; outline: 1px dotted #c46a10; outline-offset: -1px; background: #3399ff; color: #fff; }

/* Map view */
.view {
  display: grid;
  grid-template: 1fr 18px / 1fr 17px;
  min-width: 0;
  min-height: 0;
  margin-bottom: 1px;
  border: 1px solid #77757a;
  border-width: 1px 0 0 2px;
  background: #f7f3f8;
}
.map { width: 100%; height: 100%; min-width: 0; min-height: 0; background: #fff; shape-rendering: crispEdges; }
.coast { fill: #ffe3c6; stroke: #6b6b6b; stroke-width: 1; }
.contours { fill: none; stroke: #6b6b6b; stroke-width: 3.500; }

.vscroll { display: grid; grid-template-rows: 17px 1fr 17px; border-left: 1px solid #e0dee2; border-right: 1px solid #aaa8ac; }
.vscroll button, .hbar .arrow { display: grid; place-items: center; border: 1px solid #bdbbbf; background: #fff; }
.vscroll svg, .hbar .arrow svg { width: 9px; height: 9px; fill: none; stroke: #666; stroke-width: 1.500; }
.thumb { display: grid; place-items: center; border: 1px solid #aaa8ac; background: #dedede; }
.vscroll .thumb { border-left: 0; }
.vscroll .thumb i { width: 7px; height: 8px; background: repeating-linear-gradient(#555 0 2px, transparent 2px 3px); }
.hbar .thumb i { width: 8px; height: 7px; background: repeating-linear-gradient(90deg, #555 0 2px, transparent 2px 3px); }
.hbar { display: flex; min-width: 0; border-top: 1px solid #e0dee2; }
.hbar button { display: grid; place-items: center; flex: none; width: 17px; }
.hbar svg { width: 11px; height: 11px; }
.hbar .active { border: 1px solid #3399d8; background: #ddf0fc; }
.hbar .sep { width: 3px; margin: 0 5px 0 0; }
.hbar .thumb { flex: 1; }
.corner { border-right: 1px solid #dddbdf; border-bottom: 1px solid #dddbdf; }

.dock { display: flex; flex-direction: column; gap: 13px; padding-top: 1px; }
.dock button {
  display: flex;
  flex-direction: column;
  align-items: center;
  gap: 3px;
  height: 53px;
  padding-top: 4px;
  border: 1px solid #a3a1a5;
  border-right: 0;
  border-radius: 3px 0 0 3px;
  background: #f7f3f8;
  color: #555;
}
.dock span { writing-mode: vertical-rl; text-orientation: sideways; line-height: 16px; }

.statusbar { position: relative; display: flex; align-items: center; justify-content: flex-end; padding: 2px 158px 0 0; background: #f7f3f8; }
.watermark { position: absolute; right: 0; bottom: 0; font: 17px/22px "Liberation Mono", monospace; color: rgba(80, 76, 70, .28); }

/* Context menu */
.context-menu {
  position: absolute;
  left: 130px;
  top: 275px;
  display: flex;
  flex-direction: column;
  width: 169px;
  padding: 1px;
  border: 1px solid #77757a;
  background: linear-gradient(90deg, #fdfbff 0 10px, #f5f5f6 18px, #f7f3f8 27px, #fff 28px);
  box-shadow: 3px 3px 3px rgba(0, 0, 0, .35);
}
.context-menu button { display: flex; align-items: center; height: 23px; padding-left: 35px; text-align: left; white-space: nowrap; }
.context-menu button svg { margin: 0 14px 0 -30px; }
.context-menu .sub { justify-content: space-between; padding-right: 6px; }
.sub::after { content: ""; border: 4px solid transparent; border-left: 5px solid #000; border-right: 0; }
.context-menu hr { width: 131px; height: 1px; margin: 1px 0 1px 35px; border: 0; background: #bdbbbf; }
```

FILE: map.js
```js
// Roughens the coastline with small repeatable steps between its vertices.
const coast = document.querySelector(".coast");
const nums = coast.getAttribute("d").match(/\d+/g).map(Number);
const shore = [];
let seed = 7;
const jitter = () => {
  seed = (seed * 1103515245 + 12345) % 2147483648;
  return (seed / 2147483648 - 0.5) * 3;
};
for (let i = 0; i < nums.length; i += 2) {
  const x = nums[i], y = nums[i + 1];
  const nx = nums[(i + 2) % nums.length], ny = nums[(i + 3) % nums.length];
  const steps = Math.max(1, Math.round(Math.hypot(nx - x, ny - y) / 3));
  shore.push(`${x} ${y}`);
  for (let s = 1; s < steps; s++) {
    shore.push(`${x + (nx - x) * s / steps + jitter()} ${y + (ny - y) * s / steps + jitter()}`);
  }
}
coast.setAttribute("d", "M" + shore.join("L") + "Z");

// Replaces each contour's straight segments with a smooth curve through its points.
document.querySelectorAll(".contours > *").forEach((line) => {
  const closed = line.tagName === "polygon";
  const p = line.getAttribute("points").split(" ").map((s) => s.split(",").map(Number));
  const n = p.length;
  const at = (i) => closed ? p[(i + n) % n] : p[Math.min(Math.max(i, 0), n - 1)];
  let d = `M${p[0]}`;
  for (let i = 0; i < (closed ? n : n - 1); i++) {
    const [a, b, c, e] = [at(i - 1), at(i), at(i + 1), at(i + 2)];
    const len = Math.hypot(c[0] - b[0], c[1] - b[1]);
    const handle = (u, v) => {
      const dx = v[0] - u[0], dy = v[1] - u[1];
      const k = Math.min(1 / 6, len / 3 / (Math.hypot(dx, dy) || 1));
      return [dx * k, dy * k];
    };
    const h1 = handle(a, c), h2 = handle(b, e);
    d += `C${b[0] + h1[0]},${b[1] + h1[1]} ${c[0] - h2[0]},${c[1] - h2[1]} ${c}`;
  }
  const path = document.createElementNS("http://www.w3.org/2000/svg", "path");
  path.setAttribute("d", closed ? d + "Z" : d);
  line.replaceWith(path);
});
```
